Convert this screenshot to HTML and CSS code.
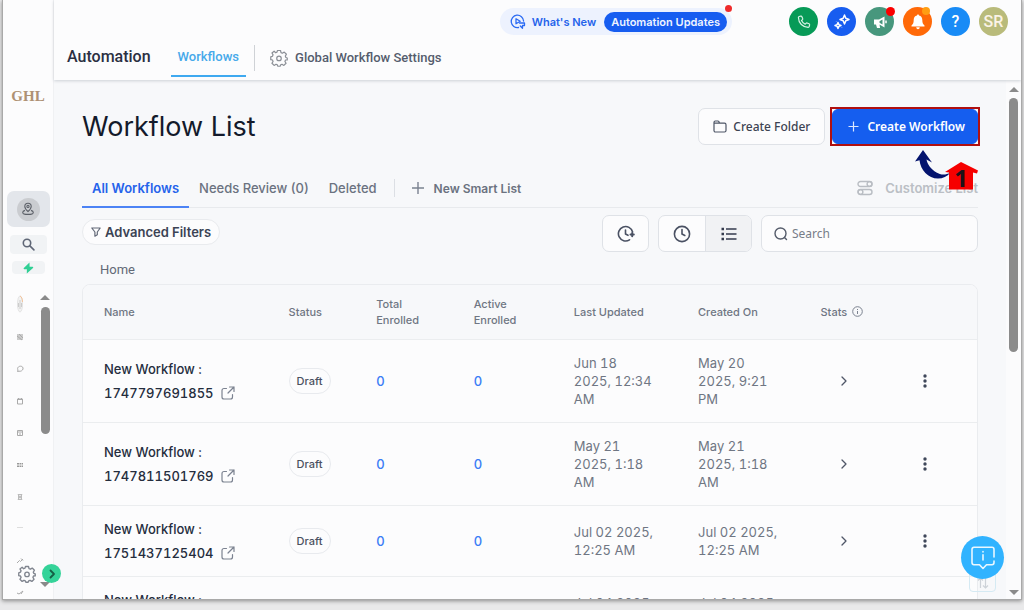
FILE: index.html
```
<!DOCTYPE html>
<html lang="en">
<head>
<meta charset="utf-8">
<title>Workflow List</title>
<link rel="stylesheet" href="styles.css">
</head>
<body>
<div class="frame">
  <aside class="sidebar">
    <div class="logo">GHL</div>
    <button class="tile tile-location" aria-label="Location"><span class="tile-disc"><svg width="14" height="14" viewBox="0 0 14 14" fill="none" stroke="#5c6068" stroke-width="1.1"><path d="M7 9.5C4.8 7.4 3.8 6 3.8 4.4a3.2 3.2 0 0 1 6.4 0C10.2 6 9.2 7.4 7 9.5z"/><circle cx="7" cy="4.4" r="1.1"/><path d="M4 8.4C2.6 8.8 1.7 9.5 1.7 10.4c0 1.2 2.300 2 5.300 2s5.300-.8 5.300-2c0-.9-.9-1.600-2.300-2"/></svg></span></button>
    <button class="tile tile-search" aria-label="Search"><svg width="13" height="13" viewBox="0 0 13 13" fill="none" stroke="#5f6676" stroke-width="1.600" stroke-linecap="round"><circle cx="5" cy="5" r="3.700"/><path d="M7.900 7.900l4 4"/></svg></button>
    <button class="tile tile-bolt" aria-label="Quick actions"><svg width="11" height="12" viewBox="0 0 11 12" fill="#2fcf94"><path d="M6.500 .5L.8 6c-.4.500-.1 1.200.5 1.200h2.600L3.800 11.500l6.200-5.400c.5-.5.200-1.300-.4-1.300H6.600z"/></svg></button>
    <div class="side-scroll">
      <nav class="side-icons" aria-label="Sections">
        <svg viewBox="0 0 8 18" class="tall"><ellipse cx="4" cy="9" rx="2.500" ry="8" fill="#f3f3f3" stroke="#e4e4e4"/><path d="M4 1c1.500.500 2.500 3 2.500 6" stroke="#f3c39a" fill="none"/><path d="M4 5v9M2.500 8v4M5.500 8v4" stroke="#ccc"/></svg>
        <svg viewBox="0 0 8 8"><path d="M1 1h6v6H1z" fill="#ccc"/><path d="M1 3l5 4M3 1l4 4" stroke="#aaa"/></svg>
        <svg viewBox="0 0 8 8"><path d="M1.500 6.500L2 5C.8 3 2.500 1.200 4.500 1.200S7.300 2.600 7 4 4.700 6.700 3 6.200z" fill="none" stroke="#aaa"/></svg>
        <svg viewBox="0 0 8 8"><path d="M1.500 2h5v5h-5zM1 2.500h6M2.500 1v1M5.500 1v1" fill="none" stroke="#aaa"/></svg>
        <svg viewBox="0 0 8 8"><path d="M1.500 1.500h5v5h-5zM1.500 3h5M3 5h2" fill="none" stroke="#aaa"/></svg>
        <svg viewBox="0 0 8 8"><path d="M1 2h2v1.500H1zM3.500 2H5v1.500H3.500zM5.500 2H7v1.500H5.500zM1 4.500h2V6H1zM3.500 4.500H5V6H3.500zM5.500 4.500H7V6H5.500z" fill="#999"/></svg>
        <svg viewBox="0 0 8 8"><path d="M2 1.500h4L4 4l2 2.500H2L4 4zM2.500 1v6M5.500 1v6" fill="none" stroke="#bbb"/></svg>
        <svg viewBox="0 0 8 8"><path d="M1 2.500h6" stroke="#ddd"/></svg>
        <svg viewBox="0 0 8 8"><path d="M1 6l2.500-2.500 1 1L7 2M5 1.500L7 3.500" fill="none" stroke="#aaa"/></svg>
        <svg viewBox="0 0 8 8"><path d="M1 4l2 1 4-3-2 3" fill="none" stroke="#aaa"/></svg>
      </nav>
      <div class="bar bar-side"><span class="arrow-up"></span><span class="thumb"></span></div>
    </div>
    <div class="side-foot">
      <svg width="18" height="18" viewBox="0 0 24 24" fill="#fcfcfd" stroke="#80858f" stroke-width="1.800" stroke-linejoin="round"><path d="M10 2h4l.7 2.800 1.800.8 2.500-1.500 2.900 2.900-1.500 2.500.8 1.800L23 12v2.500l-2.300.2-.8 1.800 1.500 2.500-2.900 2.900-2.500-1.500-1.800.8L13.500 23h-3l-.7-1.800-1.800-.8-2.500 1.500L2.600 19l1.500-2.500-.8-1.800L1 14.200V10.500l2.300-.9.8-1.800L2.600 5.300 5.500 2.900 7.500 5l1.800-.8z"/><circle cx="12" cy="12.500" r="3"/></svg>
      <span class="arrow-down"></span>
      <button class="expand" aria-label="Expand sidebar"><svg width="10" height="10" viewBox="0 0 10 10" fill="none" stroke="#155e45" stroke-width="1.800" stroke-linecap="round" stroke-linejoin="round"><path d="M3.500 1.500L7 5 3.500 8.500"/></svg></button>
    </div>
  </aside>

  <div class="main">
    <header class="header">
      <div class="top-row">
        <div class="news">
          <svg width="16" height="16" viewBox="0 0 16 16" fill="none" stroke="#2b6bf3" stroke-width="1.300" stroke-linecap="round" stroke-linejoin="round"><path d="M8.500 13.500A6.200 6.200 0 1 1 13.600 7"/><path d="M6 4.800v5l4.200-2.500z"/><path d="M9.500 9h5v2.500h-2v2.800L10.300 12"/></svg>
          <a class="news-link" href="#">What's New</a>
          <a class="news-pill" href="#">Automation Updates</a>
          <span class="news-dot"></span>
        </div>
        <div class="circles">
          <button class="circle green" aria-label="Phone"><svg width="14" height="14" viewBox="0 0 14 14" fill="none" stroke="#d8f3e6" stroke-width="1.200" stroke-linejoin="round"><path d="M2.200 1.500l1.600-.4c.5-.1.900.1 1.100.6l.8 1.900c.2.400 0 .8-.3 1.100l-.9.800c.8 1.600 2 2.800 3.700 3.700l.8-.9c.3-.3.700-.4 1.100-.3l1.900.8c.5.200.7.600.600 1.100l-.4 1.600c-.1.500-.5.800-1 .8C5.800 12.300 1.500 8 1.400 2.500c0-.500.300-.900.800-1z"/></svg></button>
          <button class="circle blue" aria-label="Assistant"><svg width="18" height="18" viewBox="0 0 18 18" fill="none" stroke="#fff" stroke-width="1.500" stroke-linejoin="round"><path d="M11.500 2l1.300 3.200L16 6.500l-3.200 1.300-1.300 3.200-1.300-3.200L7 6.500l3.200-1.300z"/><path d="M5 9.500l.9 2.100 2.100.9-2.100.9L5 15.500l-.9-2.100L2 12.500l2.100-.9z"/><path d="M3.500 8.200v.2M8.800 14.500v.2"/></svg></button>
          <button class="circle teal" aria-label="Announcements"><svg width="16" height="16" viewBox="0 0 16 16"><path d="M2 5.500h5l5.500-3v11L7.500 10.500l.6 3.500H5L4 10.500H2z" fill="#fff"/><path d="M7.500 7.300l3-1.800v5l-3-1.800z" fill="#47977d"/><path d="M14 6.500v2.800" stroke="#fff" stroke-width="1.500"/></svg><span class="badge red"></span></button>
          <button class="circle orange" aria-label="Notifications"><svg width="16" height="18" viewBox="0 0 16 18" fill="#fff"><path d="M8 1.500c-.7 0-1 .5-1 1C4.700 3 3.700 4.800 3.700 7c0 3-.8 4.300-2.200 5.500v1h13v-1C13.100 11.300 12.300 10 12.300 7c0-2.200-1-4-3.300-4.500 0-.5-.3-1-1-1zM6.200 14.300h3.600C9.600 15.600 9 16.200 8 16.200s-1.600-.6-1.800-1.900z"/></svg><span class="badge amber"></span></button>
          <button class="circle sky" aria-label="Help">?</button>
          <button class="circle olive" aria-label="Account">SR</button>
        </div>
      </div>
      <nav class="nav">
        <span class="nav-title">Automation</span>
        <a class="nav-tab" href="#">Workflows</a>
        <span class="nav-rule"></span>
        <a class="nav-settings" href="#"><svg width="18" height="18" viewBox="0 0 24 24" fill="none" stroke="#8b8f96" stroke-width="1.600" stroke-linejoin="round"><path d="M10 2h4l.7 2.800 1.800.8 2.500-1.500 2.900 2.900-1.500 2.500.8 1.800L23 12v2.500l-2.300.2-.8 1.800 1.500 2.500-2.900 2.900-2.500-1.500-1.800.8L13.500 23h-3l-.7-1.800-1.800-.8-2.500 1.500L2.600 19l1.500-2.500-.8-1.800L1 14.200V10.500l2.300-.9.8-1.800L2.600 5.300 5.500 2.900 7.500 5l1.800-.8z"/><circle cx="12" cy="12.500" r="3"/></svg>Global Workflow Settings</a>
      </nav>
    </header>

    <div class="body">
      <main class="content">
        <div class="title-row">
          <h1>Workflow List</h1>
          <div class="actions">
            <button class="btn"><svg width="14" height="13" viewBox="0 0 14 13" fill="none" stroke="#4d5566" stroke-width="1.200" stroke-linejoin="round"><path d="M1 10.500v-8C1 1.500 1.500 1 2.300 1h2.500c.5 0 .8.200 1 .6l.8 1.600h4.900c.9 0 1.500.6 1.500 1.500v5.800c0 .9-.6 1.500-1.500 1.500h-9C1.600 12 1 11.400 1 10.500zM1 3.200h5.500"/></svg>Create Folder</button>
            <div class="marked">
              <button class="btn primary"><svg width="11" height="11" viewBox="0 0 11 11" stroke="#dbe7ff" stroke-width="1.200"><path d="M5.500 .5v10M.5 5.500h10"/></svg>Create Workflow</button>
              <svg class="pointer" width="66" height="44" viewBox="0 0 66 44" aria-label="Step 1"><path d="M9 1L1 12.500l4.500-1.300C6.500 21 14 29.500 24 29.500c5 0 9-2 12.500-6-5 3-10 2.500-14 0C17 20 13.500 16 12.500 10.500l5.500 3z" fill="#04146e"/><path d="M47 13L64 21.500l-1 3-4-1v17H35v-17l-4-.5z" fill="#f60000"/><text class="step" x="47" y="38" text-anchor="middle">1</text></svg>
            </div>
          </div>
        </div>

        <div class="tabs">
          <button class="tab active">All Workflows</button>
          <button class="tab">Needs Review (0)</button>
          <button class="tab">Deleted</button>
          <span class="tab-rule"></span>
          <button class="tab smart"><svg width="12" height="12" viewBox="0 0 12 12" stroke="#7b8290" stroke-width="1.400"><path d="M6 0v12M0 6h12"/></svg>New Smart List</button>
          <button class="tab customize"><svg width="16" height="16" viewBox="0 0 16 16" fill="none" stroke="#b9bdc3" stroke-width="1.400"><rect x="1" y="1.500" width="14" height="5" rx="2.500"/><circle cx="12.500" cy="4" r="2.400"/><rect x="1" y="9.500" width="14" height="5" rx="2.500"/><circle cx="3.500" cy="12" r="2.400"/></svg>Customize List</button>
        </div>

        <div class="tools">
          <button class="filter"><svg width="10" height="10" viewBox="0 0 10 10" fill="none" stroke="#626978" stroke-width="1.200" stroke-linejoin="round"><path d="M.8 1h8.400L6.300 5v2.800L3.900 9.200V5z"/></svg>Advanced Filters</button>
          <div class="tool-right">
            <button class="icon-btn" aria-label="Schedule"><svg width="18" height="18" viewBox="0 0 18 18" fill="none" stroke="#4a5163" stroke-width="1.600" stroke-linecap="round" stroke-linejoin="round"><path d="M12.500 14.800A7.200 7.200 0 1 1 15.600 7"/><path d="M8.500 5v4l2.500 1.300"/><path d="M13.500 9.500h3.300M15.200 8v3.300" stroke-width="2"/></svg></button>
            <div class="toggle">
              <button aria-label="Recent"><svg width="18" height="18" viewBox="0 0 18 18" fill="none" stroke="#4a5163" stroke-width="1.600" stroke-linecap="round"><circle cx="9" cy="9" r="7.600"/><path d="M9 4.500V9l2.800 1.500"/></svg></button>
              <button class="on" aria-label="List view"><svg width="16" height="14" viewBox="0 0 16 14" stroke="#343b4d" stroke-width="1.500"><path d="M5 2h10.500M5 7h10.500M5 12h10.500"/><path d="M.5 2H3M.5 7H3M.5 12H3" stroke-width="2.500"/></svg></button>
            </div>
            <label class="search"><svg width="14" height="14" viewBox="0 0 14 14" fill="none" stroke="#555c6b" stroke-width="1.400" stroke-linecap="round"><circle cx="6.500" cy="6.500" r="5.500"/><path d="M10.500 10.500l2 2"/></svg><input type="text" placeholder="Search" aria-label="Search"></label>
          </div>
        </div>

        <a class="crumb" href="#">Home</a>

        <div class="card">
          <table>
            <colgroup><col class="c-name"><col class="c-status"><col class="c-total"><col class="c-active"><col class="c-updated"><col class="c-created"><col class="c-stats"><col class="c-more"></colgroup>
            <thead><tr><th>Name</th><th>Status</th><th>Total<br>Enrolled</th><th>Active<br>Enrolled</th><th>Last Updated</th><th>Created On</th><th><span class="stats">Stats<svg width="11" height="11" viewBox="0 0 11 11" fill="none" stroke="#7b828f"><circle cx="5.500" cy="5.500" r="4.800"/><path d="M5.500 5v3M5.500 3v1"/></svg></span></th><th></th></tr></thead>
            <tbody id="rows"></tbody>
          </table>
        </div>
      </main>
      <div class="bar bar-main"><span class="arrow-up"></span><span class="thumb"></span><span class="arrow-down"></span></div>
    </div>
  </div>

  <div class="sorter"><svg width="12" height="12" viewBox="0 0 12 12" fill="none" stroke="#cdd2d8" stroke-width="1.200"><path d="M3.500 11V1M1 3.500L3.500 1 6 3.500M8.500 1v10M6 8.500L8.500 11 11 8.500"/></svg></div>
  <button class="chat" aria-label="Help chat"><svg width="26" height="26" viewBox="0 0 26 26" fill="none" stroke="#eaf7ff" stroke-width="1.600" stroke-linecap="round" stroke-linejoin="round"><path d="M24 12V4.500C24 3 23.300 2.300 22 2.300H4C2.700 2.300 2 3 2 4.500v13C2 19 2.700 19.700 4 19.700h5.500L13 23.500l3.500-3.800H22c1.300 0 2-.7 2-2.200V16"/><path d="M13 9.800V15M13 6.500v.4"/></svg></button>
</div>
<script src="script.js"></script>
</body>
</html>
```
FILE: script.js
```
const workflows = [
  ["1747797691855", "Jun 18<br>2025, 12:34<br>AM", "May 20<br>2025, 9:21<br>PM"],
  ["1747811501769", "May 21<br>2025, 1:18<br>AM", "May 21<br>2025, 1:18<br>AM"],
  ["1751437125404", "Jul 02 2025,<br>12:25 AM", "Jul 02 2025,<br>12:25 AM"],
  ["1751610482215", "Jul 04 2025,<br>12:28 AM", "Jul 04 2025,<br>12:28 AM"]
];

document.getElementById("rows").innerHTML = workflows.map(([id, updated, created]) => `
  <tr>
    <td class="name">New Workflow :<br><a href="#">${id}<svg width="14" height="14" viewBox="0 0 14 14" fill="none" stroke="#7b8290" stroke-width="1.200" stroke-linecap="round" stroke-linejoin="round"><path d="M5.500 2.500H3C1.800 2.500 1 3.300 1 4.500V11c0 1.200.8 2 2 2h6.500c1.200 0 2-.8 2-2V8.500M8.500 1H13v4.500M13 1L7 7"/></svg></a></td>
    <td><span class="draft">Draft</span></td>
    <td><a class="count" href="#">0</a></td>
    <td><a class="count" href="#">0</a></td>
    <td class="date">${updated}</td>
    <td class="date">${created}</td>
    <td class="open"><button aria-label="Open stats"><svg width="8" height="12" viewBox="0 0 8 12" fill="none" stroke="#4f5667" stroke-width="1.300" stroke-linecap="round" stroke-linejoin="round"><path d="M2 2l4 4-4 4"/></svg></button></td>
    <td class="more"><button aria-label="More"><svg width="4" height="14" viewBox="0 0 4 14" fill="#3f475a"><circle cx="2" cy="2" r="1.700"/><circle cx="2" cy="7" r="1.700"/><circle cx="2" cy="12" r="1.700"/></svg></button></td>
  </tr>`).join("");
```
FILE: styles.css
```
* { box-sizing: border-box; }
body { margin: 0; height: 100vh; padding: 0 2px 10px; background: #e9e9ea; font-family: Inter, "Liberation Sans", sans-serif; font-size: 13px; color: #1f2937; overflow: hidden; }
button { font: inherit; color: inherit; border: 0; background: none; padding: 0; display: flex; align-items: center; justify-content: center; }
a { color: inherit; text-decoration: none; }
svg { flex: none; display: block; }

.frame { position: relative; display: flex; height: 100%; background: #fcfcfd; border: 1px solid #a9a9a9; border-top: 0; box-shadow: 0 1px 4px #8a8a8a; overflow: hidden; }

.sidebar { width: 51px; flex: none; display: flex; flex-direction: column; align-items: center; padding-top: 87px; border-right: 1px solid #f0f1f3; position: relative; }
.logo { font: 700 15px/18px "Liberation Serif", serif; color: #ae9174; }
.tile { background: #f1f3f5; border-radius: 4px; flex: none; }
.tile-location { width: 43px; height: 36px; margin-top: 86px; border-radius: 7px; background: #e3e6eb; }
.tile-disc { width: 23px; height: 23px; border-radius: 50%; background: #caccd0; display: flex; align-items: center; justify-content: center; }
.tile-search { width: 37px; height: 19px; margin-top: 8px; }
.tile-bolt { width: 33px; height: 13px; margin-top: 7px; }
.side-scroll { align-self: stretch; flex: 1; min-height: 0; display: flex; justify-content: space-between; padding: 21px 3px 0 13px; overflow: hidden; }
.side-icons { display: flex; flex-direction: column; gap: 24px; }
.side-icons svg { width: 8px; height: 8px; }
.side-icons .tall { height: 18px; margin-bottom: -4px; }
.side-foot { position: absolute; left: 15px; bottom: 16px; display: flex; align-items: center; }
.side-foot .arrow-down { position: absolute; left: 22px; top: 18px; }
.expand { position: relative; width: 19px; height: 19px; margin-left: 6px; border-radius: 50%; background: #35d399; }

.bar { display: flex; flex-direction: column; align-items: center; gap: 5px; flex: none; }
.arrow-up, .arrow-down { border: 5px solid transparent; width: 0; height: 0; }
.arrow-up { border-top: 0; border-bottom-color: #8a8a8a; }
.arrow-down { border-bottom: 0; border-top-color: #8a8a8a; }
.thumb { width: 9px; border-radius: 5px; background: #8b8b8b; }
.bar-side { width: 10px; }
.bar-side .thumb { height: 127px; margin-top: 2px; }
.bar-main { width: 15px; padding: 7px 0 4px; background: #fbfbfc; }
.bar-main .thumb { height: 254px; margin-top: 1px; }
.bar-main .arrow-down { margin-top: auto; }

.main { flex: 1; min-width: 0; display: flex; flex-direction: column; }
.header { height: 80px; flex: none; display: flex; flex-direction: column; justify-content: space-between; box-shadow: 0 1px 3px #ccd0d6; position: relative; z-index: 1; }
.top-row { display: flex; justify-content: flex-end; align-items: center; gap: 57px; padding: 7px 13px 0 0; }
.news { position: relative; display: flex; align-items: center; height: 27px; padding: 0 5px 0 10px; border-radius: 14px; background: #edf2fe; font-size: 11px; font-weight: 600; }
.news-link { color: #2563eb; margin: 0 8px 0 6px; }
.news-pill { background: #175df0; color: #eef4ff; border-radius: 10px; line-height: 20px; padding: 0 7px; }
.news-dot { position: absolute; right: 0; top: -3px; width: 7px; height: 7px; border-radius: 50%; background: #ef2b2b; }
.circles { display: flex; gap: 9px; }
.circle { position: relative; width: 29px; height: 29px; border-radius: 50%; color: #fff; font-family: Roboto, sans-serif; font-weight: 500; font-size: 16px; }
.green { background: #079a57; }
.blue { background: #175df0; }
.teal { background: #47977d; }
.orange { background: #ff6908; }
.sky { background: #188bf6; }
.olive { background: #b9bb7b; color: #fbf3e6; }
.badge { position: absolute; top: 0; right: -1px; width: 9px; height: 9px; border-radius: 50%; }
.badge.red { background: #fb0000; }
.badge.amber { background: #ff9d13; right: 2px; width: 8px; height: 8px; }

.nav { display: flex; align-items: stretch; padding: 0 0 3px 13px; height: 44px; font-family: Roboto, sans-serif; font-size: 13px; font-weight: 500; }
.nav > * { display: flex; align-items: center; }
.nav-title { font-size: 16px; color: #2b2f42; margin-right: 20px; }
.nav-tab { color: #47a9ea; padding: 2px 7px 0; border-bottom: 2px solid #3fa9f0; }
.nav-rule { width: 1px; height: 26px; margin: 9px 15px 0 8px; background: #cfd2d6; }
.nav-settings { gap: 7px; color: #555c6d; padding-top: 2px; }

.body { flex: 1; min-height: 0; display: flex; background: #f7f8fa; }
.content { flex: 1; min-width: 0; padding: 28px 28px 0; overflow: hidden; }
.title-row { display: flex; justify-content: space-between; align-items: center; height: 37px; }
h1 { margin: 0; font-size: 27px; line-height: 36px; font-weight: 400; color: #131a2b; }
.actions { display: flex; align-items: center; gap: 7px; font-family: "Noto Sans", "Open Sans", sans-serif; font-size: 12px; font-weight: 500; }
.btn { height: 37px; gap: 6px; padding: 0 14px; background: #fcfcfd; border: 1px solid #dfe2e7; border-radius: 7px; color: #3c4352; }
.primary { height: 35px; gap: 8px; padding: 0 12px 0 15px; background: #155eef; border-color: #155eef; color: #fff; border-radius: 6px; font-weight: 600; }
.marked { position: relative; outline: 2px solid #b01010; z-index: 2; }
.pointer { position: absolute; left: 82px; top: 40px; }
.step { font: 700 24px "Noto Sans", sans-serif; fill: #1b1218; }

.tabs { display: flex; align-items: stretch; height: 39px; margin-top: 24px; border-bottom: 1px solid #e8eaed; font-weight: 500; color: #6b7280; }
.tab { padding: 0 10px; }
.tab.active { color: #2563eb; font-weight: 600; border-bottom: 2px solid #4c83f5; margin-bottom: -1px; }
.tab-rule { width: 1px; height: 18px; background: #dcdfe4; margin: 10px 7px 0; }
.tab.smart { gap: 10px; font-weight: 600; font-size: 12px; }
.tab.customize { margin-left: auto; padding: 0; gap: 12px; color: #bbbfc5; font-weight: 600; }

.tools { display: flex; justify-content: space-between; align-items: flex-start; margin-top: 7px; }
.filter { height: 26px; margin-top: 4px; padding: 0 8px; gap: 4px; border: 1px solid #e9ebee; border-radius: 13px; background: #fcfcfd; font-weight: 600; color: #3b4354; }
.tool-right { display: flex; gap: 9px; height: 37px; }
.icon-btn, .toggle, .search { background: #fcfcfd; border: 1px solid #dfe2e7; border-radius: 7px; }
.icon-btn { width: 47px; }
.toggle { display: flex; overflow: hidden; }
.toggle button { width: 46px; }
.toggle .on { background: #f1f2f4; border-left: 1px solid #dfe2e7; }
.search { width: 217px; display: flex; align-items: center; gap: 4px; padding: 0 12px; }
.search input { flex: 1; min-width: 0; border: 0; background: none; outline: 0; padding: 0; font: 12px "Noto Sans", sans-serif; }
.search input::placeholder { color: #777d88; opacity: 1; }
.crumb { display: block; width: fit-content; font: 13px/16px Roboto, sans-serif; color: #626976; margin: 10px 18px 6px; }

.card { border: 1px solid #eaecef; border-radius: 8px 8px 0 0; background: #fcfcfd; overflow: hidden; }
table { width: 100%; border-collapse: collapse; table-layout: fixed; }
.c-name { width: 20.65%; }
.c-status { width: 9.8%; }
.c-total { width: 10.9%; }
.c-active { width: 11.2%; }
.c-updated { width: 13.9%; }
.c-created { width: 13.7%; }
.c-stats { width: 11.6%; }
.c-more { width: 8.25%; }
th { height: 54px; padding: 0 0 0 21px; text-align: left; font-size: 11px; line-height: 16px; font-weight: 500; color: #6f7683; background: #f7f8fa; }
td { padding: 14px 18px 14px 21px; border-top: 1px solid #ebedef; vertical-align: middle; }
.stats { display: flex; align-items: center; gap: 5px; }
.name { padding: 11px 0 11px 21px; line-height: 24px; font-weight: 500; color: #252d3d; font-variant-numeric: tabular-nums; }
.name a { display: flex; align-items: center; gap: 7px; }
.draft { display: inline-block; border: 1px solid #e8eaee; border-radius: 13px; line-height: 24px; padding: 0 7px; font-size: 11px; font-weight: 500; color: #4a5160; }
.count { color: #3b7cf6; font-weight: 500; }
.date { line-height: 18px; color: #6f7683; padding-right: 0; white-space: nowrap; font-variant-numeric: tabular-nums; }
.open button { margin-left: 19px; }
.more { padding: 0; }
.more button { margin-left: 20px; }

.chat { position: absolute; right: 17px; bottom: 20px; width: 43px; height: 43px; border-radius: 50%; background: #31b3ff; }
.sorter { position: absolute; right: 25px; bottom: 7px; width: 27px; height: 22px; border: 1px solid #d5eaf3; border-radius: 4px; display: flex; align-items: flex-end; justify-content: center; padding-bottom: 2px; }
```
